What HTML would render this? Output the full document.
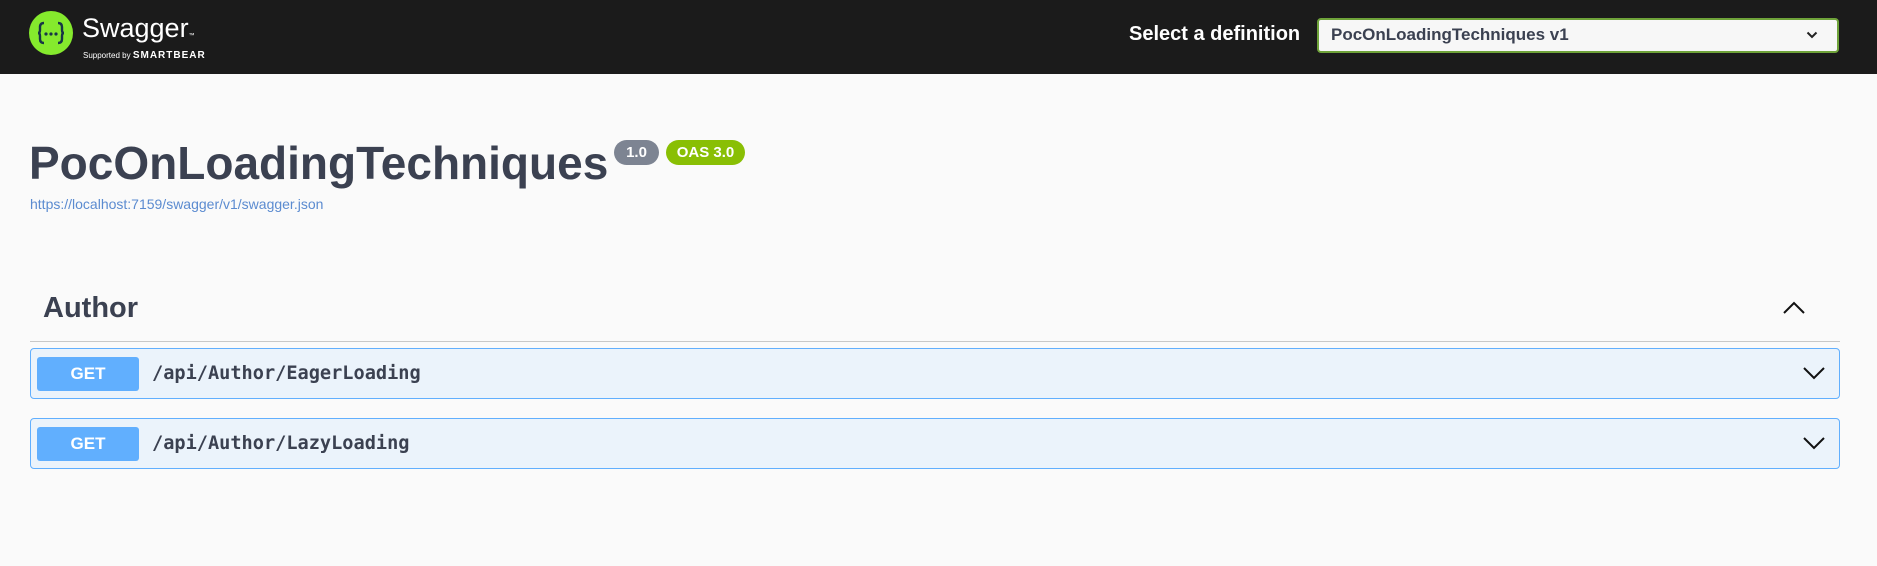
<!DOCTYPE html>
<html><head><meta charset="utf-8"><style>
*{margin:0;padding:0;box-sizing:border-box}
body{width:1877px;height:566px;background:#fafafa;font-family:"Liberation Sans",sans-serif;position:relative;overflow:hidden;color:#3b4151}
.top{position:absolute;left:0;top:0;width:1877px;height:74px;background:#1b1b1b}
.abs{position:absolute;white-space:nowrap}
.op{position:absolute;left:30px;width:1810px;height:51px;background:#ebf3fb;border:1px solid #61affe;border-radius:4px}
.get{position:absolute;left:6px;top:8px;width:102px;height:34px;background:#61affe;border-radius:3px;color:#fff;font-weight:bold;font-size:17px;text-align:center;line-height:34px}
.path{position:absolute;left:121px;top:0;line-height:49px;font-family:"DejaVu Sans Mono","Liberation Mono",monospace;font-weight:bold;font-size:18.6px;color:#3b4151}
.chev{position:absolute;right:14px;top:17px}
</style></head><body>
<div class="top">
<svg class="abs" style="left:29px;top:11px" width="44" height="44" viewBox="0 0 44 44"><circle cx="22" cy="22" r="22" fill="#85ea2d"/><path d="M15 12q-4 0-4 4v3q0 3-2 3 2 0 2 3v3q0 4 4 4M29 12q4 0 4 4v3q0 3 2 3-2 0-2 3v3q0 4-4 4" fill="none" stroke="#173647" stroke-width="2.4"/><circle cx="17" cy="23" r="1.6" fill="#173647"/><circle cx="22" cy="23" r="1.6" fill="#173647"/><circle cx="27" cy="23" r="1.6" fill="#173647"/></svg>
<div class="abs" style="left:82px;top:13px;font-size:27px;color:#fff;line-height:30px">Swagger<span style="font-size:6px">™</span></div>
<div class="abs" style="left:83px;top:50px;font-size:8px;color:#fff">Supported by <b style="font-size:10px;letter-spacing:1px">SMARTBEAR</b></div>
<div class="abs" style="left:1129px;top:23px;font-size:20px;font-weight:bold;color:#fff">Select a definition</div>
<div class="abs" style="left:1317px;top:18px;width:522px;height:35px;background:#f7f7f7;border:2px solid #6fa33a;border-radius:4px"></div>
<div class="abs" style="left:1331px;top:25px;font-size:17px;font-weight:bold;color:#3b4151">PocOnLoadingTechniques v1</div>
<svg class="abs" style="left:1806px;top:30px" width="12" height="10" viewBox="0 0 12 10"><path d="M1.5 2.5 6 7 10.5 2.5" fill="none" stroke="#222" stroke-width="2"/></svg>
</div>
<div class="abs" style="left:29px;top:136px;font-size:46px;font-weight:bold;color:#3b4151">PocOnLoadingTechniques</div>
<div class="abs" style="left:614px;top:140px;width:45px;height:25px;background:#7d8492;border-radius:13px;color:#fff;font-weight:bold;font-size:15px;text-align:center;line-height:25px">1.0</div>
<div class="abs" style="left:666px;top:140px;width:79px;height:25px;background:#89bf04;border-radius:13px;color:#fff;font-weight:bold;font-size:15px;text-align:center;line-height:25px">OAS 3.0</div>
<div class="abs" style="left:30px;top:196px;font-size:14px;color:#5b8bd0">https://localhost:7159/swagger/v1/swagger.json</div>
<div class="abs" style="left:43px;top:292px;font-size:29px;font-weight:bold;color:#3b4151">Author</div>
<svg class="abs" style="left:1782px;top:300px" width="24" height="16" viewBox="0 0 24 16"><path d="M2 13 12 3 22 13" fill="none" stroke="#111" stroke-width="2"/></svg>
<div class="abs" style="left:30px;top:341px;width:1810px;height:1px;background:#c8c8c8"></div>
<div class="op" style="top:348px"><div class="get">GET</div><div class="path">/api/Author/EagerLoading</div>
<svg class="chev" width="22" height="14" viewBox="0 0 22 14"><path d="M1 2 11 12 21 2" fill="none" stroke="#111" stroke-width="2"/></svg></div>
<div class="op" style="top:418px"><div class="get">GET</div><div class="path">/api/Author/LazyLoading</div>
<svg class="chev" width="22" height="14" viewBox="0 0 22 14"><path d="M1 2 11 12 21 2" fill="none" stroke="#111" stroke-width="2"/></svg></div>
</body></html>
